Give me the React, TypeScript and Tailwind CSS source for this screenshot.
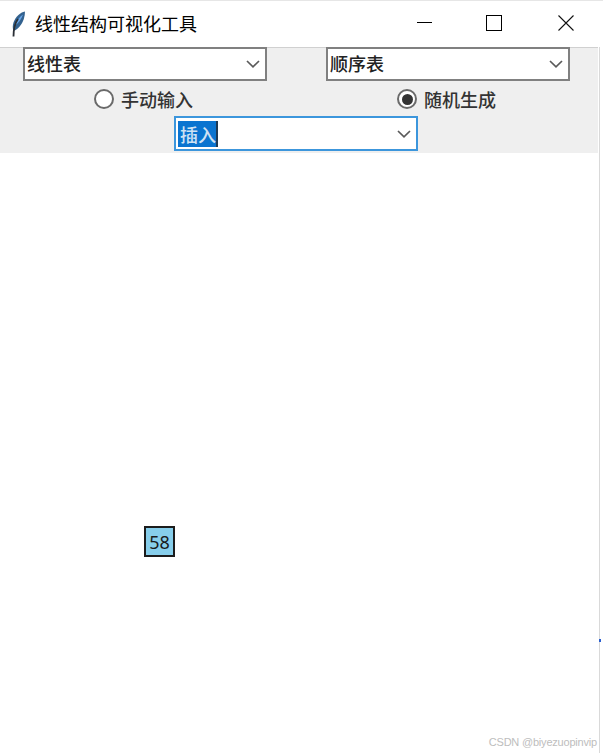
import { ReactNode } from 'react'

const cjk = '[font-family:"Noto_Sans_CJK_SC","Liberation_Sans",sans-serif]'

function Chevron() {
    return (
        <svg width="14" height="8" viewBox="0 0 14 8" fill="none" className="shrink-0">
            <path d="M1 1 L7 6.8 L13 1" stroke="#5a5a5a" strokeWidth="1.7" />
        </svg>
    )
}

function Combo({ children, focused, className }: { children: ReactNode; focused?: boolean; className: string }) {
    return (
        <div className={`flex items-center justify-between bg-white border-2 pl-[2px] pr-[5px] ${focused ? 'border-[#3c96dc]' : 'border-[#808080]'} ${className}`}>
            <div className="mt-[-2px] text-[18px] leading-none font-medium text-[#222]">{children}</div>
            <Chevron />
        </div>
    )
}

function Radio({ label, checked }: { label: string; checked?: boolean }) {
    return (
        <div className="flex items-center gap-[7px]">
            <div className="flex h-[20px] w-[20px] items-center justify-center rounded-full border-2 border-[#6a6a6a] bg-white">
                {checked && <div className="h-[11px] w-[11px] rounded-full bg-[#333]" />}
            </div>
            <span className="mt-[-1px] text-[18px] leading-none font-medium text-[#333]">{label}</span>
        </div>
    )
}

export default function App() {
    return (
        <div className={`relative flex h-[753px] w-[603px] flex-col overflow-hidden bg-white ${cjk}`}>
            <div className="h-[1px] bg-[#e6e6e6]" />
            {/* title bar */}
            <div className="flex h-[46px] items-center pb-[3px]">
                <svg width="16" height="26" viewBox="0 0 16 26" className="ml-[10px] mt-[2px] shrink-0">
                    <path d="M15 0.5 C10 1.5 5.5 6 3.5 11.5 C2.5 14.5 2.5 17.5 3.5 20 C8 18.5 12 13.5 13.8 8 C14.6 5.5 15 3 15 0.5 Z" fill="#33628f" />
                    <path d="M13 3.5 C10 5.5 7 9.5 5.5 14 C8.5 12 11.5 8 13 3.5 Z" fill="#69a6ea" />
                    <path d="M8 8 C5 12 3.5 18 3.5 25.5" stroke="#2b3036" strokeWidth="1.8" fill="none" />
                </svg>
                <div className="ml-[9px] text-[18px] leading-none text-black">线性结构可视化工具</div>
                <div className="ml-auto flex items-center">
                    <div className="mr-[54px] h-[1px] w-[15px] bg-black" />
                    <div className="mr-[56px] h-[16px] w-[16px] border border-black" />
                    <svg width="16" height="16" viewBox="0 0 16 16" className="mr-[29px]">
                        <path d="M0.5 0.5 L15.5 15.5 M15.5 0.5 L0.5 15.5" stroke="#111" strokeWidth="1.1" />
                    </svg>
                </div>
            </div>
            {/* panel */}
            <div className="flex h-[106px] w-[598px] flex-col bg-[#efefef] shadow-[inset_0_1px_0_#d0d0d0]">
                <div className="flex pl-[23px]">
                    <Combo className="h-[34px] w-[244px]">线性表</Combo>
                    <Combo className="ml-[59px] h-[34px] w-[244px]">顺序表</Combo>
                </div>
                <div className="mt-[7px] flex h-[22px] items-center">
                    <div className="ml-[94px]"><Radio label="手动输入" /></div>
                    <div className="ml-[204px]"><Radio label="随机生成" checked /></div>
                </div>
                <div className="mt-[6px] pl-[174px]">
                    <Combo focused className="h-[35px] w-[244px]">
                        <div className="mt-[2px] flex h-[26px] items-center border-r-2 border-[#1d3a55] bg-[#0a74d0] pl-[2px] text-[#cfe2f3]">插入</div>
                    </Combo>
                </div>
            </div>
            {/* canvas */}
            <div className="flex-1 pl-[144px] pt-[373px]">
                <div className="flex h-[31px] w-[31px] items-center justify-center border-2 border-[#1c1c1c] bg-[#87ceeb] text-[18px] leading-none text-[#1a1a1a] [font-family:'Noto_Sans','Liberation_Sans',sans-serif]">
                    58
                </div>
            </div>
            {/* right window edge */}
            <div className="absolute right-[3px] top-[47px] h-[706px] w-[1px] bg-[#d9d9d9]" />
            <div className="absolute right-[2px] top-[639px] h-[3px] w-[2px] bg-[#2a5fd0]" />
            <div className="absolute right-[6px] bottom-[5px] text-[11px] leading-none tracking-[-0.2px] text-[#bdbdbd] [font-family:'Liberation_Sans',sans-serif]">
                CSDN @biyezuopinvip
            </div>
        </div>
    )
}
